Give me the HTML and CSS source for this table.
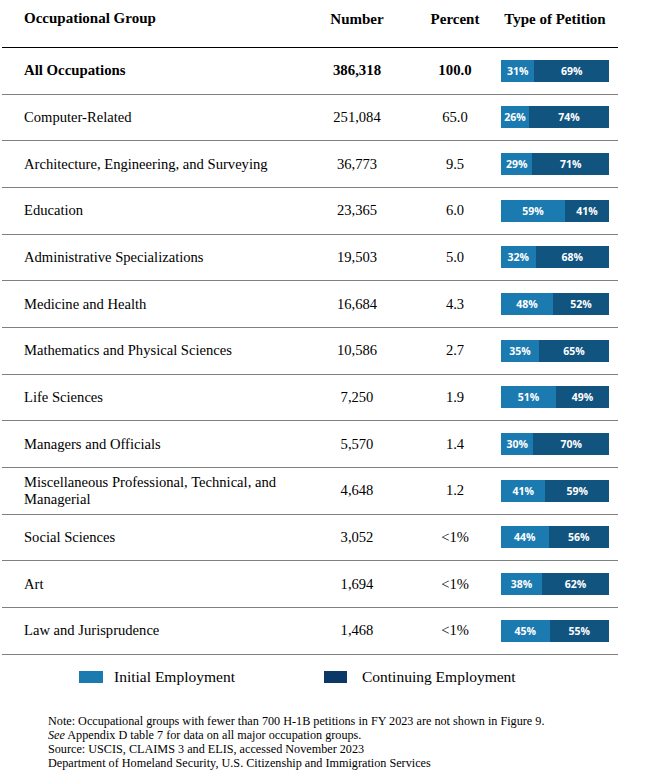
FILE: index.html
```html
<!DOCTYPE html>
<html lang="en">

<head>
    <meta charset="UTF-8">
    <title>H-1B Petitions by Occupational Group</title>
    <link rel="stylesheet" href="styles.css">
</head>

<body>
    <div class="figure">
        <div class="table">
            <div class="row head">
                <div class="group">Occupational Group</div>
                <div class="num">Number</div>
                <div class="pct">Percent</div>
                <div class="type">Type of Petition</div>
            </div>

            <div class="row total">
                <div class="group">All Occupations</div>
                <div class="num">386,318</div>
                <div class="pct">100.0</div>
                <div class="bar"><span class="init" style="width: 31%">31%</span><span class="cont">69%</span></div>
            </div>
            <div class="row">
                <div class="group">Computer-Related</div>
                <div class="num">251,084</div>
                <div class="pct">65.0</div>
                <div class="bar"><span class="init" style="width: 26%">26%</span><span class="cont">74%</span></div>
            </div>
            <div class="row">
                <div class="group">Architecture, Engineering, and Surveying</div>
                <div class="num">36,773</div>
                <div class="pct">9.5</div>
                <div class="bar"><span class="init" style="width: 29%">29%</span><span class="cont">71%</span></div>
            </div>
            <div class="row">
                <div class="group">Education</div>
                <div class="num">23,365</div>
                <div class="pct">6.0</div>
                <div class="bar"><span class="init" style="width: 59%">59%</span><span class="cont">41%</span></div>
            </div>
            <div class="row">
                <div class="group">Administrative Specializations</div>
                <div class="num">19,503</div>
                <div class="pct">5.0</div>
                <div class="bar"><span class="init" style="width: 32%">32%</span><span class="cont">68%</span></div>
            </div>
            <div class="row">
                <div class="group">Medicine and Health</div>
                <div class="num">16,684</div>
                <div class="pct">4.3</div>
                <div class="bar"><span class="init" style="width: 48%">48%</span><span class="cont">52%</span></div>
            </div>
            <div class="row">
                <div class="group">Mathematics and Physical Sciences</div>
                <div class="num">10,586</div>
                <div class="pct">2.7</div>
                <div class="bar"><span class="init" style="width: 35%">35%</span><span class="cont">65%</span></div>
            </div>
            <div class="row">
                <div class="group">Life Sciences</div>
                <div class="num">7,250</div>
                <div class="pct">1.9</div>
                <div class="bar"><span class="init" style="width: 51%">51%</span><span class="cont">49%</span></div>
            </div>
            <div class="row">
                <div class="group">Managers and Officials</div>
                <div class="num">5,570</div>
                <div class="pct">1.4</div>
                <div class="bar"><span class="init" style="width: 30%">30%</span><span class="cont">70%</span></div>
            </div>
            <div class="row">
                <div class="group">Miscellaneous Professional, Technical, and Managerial</div>
                <div class="num">4,648</div>
                <div class="pct">1.2</div>
                <div class="bar"><span class="init" style="width: 41%">41%</span><span class="cont">59%</span></div>
            </div>
            <div class="row">
                <div class="group">Social Sciences</div>
                <div class="num">3,052</div>
                <div class="pct">&lt;1%</div>
                <div class="bar"><span class="init" style="width: 44%">44%</span><span class="cont">56%</span></div>
            </div>
            <div class="row">
                <div class="group">Art</div>
                <div class="num">1,694</div>
                <div class="pct">&lt;1%</div>
                <div class="bar"><span class="init" style="width: 38%">38%</span><span class="cont">62%</span></div>
            </div>
            <div class="row">
                <div class="group">Law and Jurisprudence</div>
                <div class="num">1,468</div>
                <div class="pct">&lt;1%</div>
                <div class="bar"><span class="init" style="width: 45%">45%</span><span class="cont">55%</span></div>
            </div>
        </div>

        <div class="legend">
            <div class="key"><span class="swatch light"></span>Initial Employment</div>
            <div class="key second"><span class="swatch dark"></span>Continuing Employment</div>
        </div>

        <div class="notes">
            <p>Note: Occupational groups with fewer than 700 H-1B petitions in FY 2023 are not shown in Figure 9.</p>
            <p><em>See</em> Appendix D table 7 for data on all major occupation groups.</p>
            <p>Source: USCIS, CLAIMS 3 and ELIS, accessed November 2023</p>
            <p>Department of Homeland Security, U.S. Citizenship and Immigration Services</p>
        </div>
    </div>
</body>

</html>
```

FILE: styles.css
```css
body {
    margin: 0;
    padding: 0;
    background: #ffffff;
    color: #000000;
    font-family: 'Liberation Serif', 'Times New Roman', serif;
}

.figure {
    width: 645px;
}

.table {
    width: 616px;
    margin-left: 2px;
}

.row {
    display: grid;
    grid-template-columns: 298px 70px 109px 108px;
    align-items: center;
    box-sizing: border-box;
    height: 46.67px;
    padding: 0 9px 0 22px;
    border-bottom: 1px solid #7f7f7f;
    font-size: 14.6px;
}

.row.head {
    height: 48px;
    align-items: start;
    padding-top: 10px;
    border-bottom: 1px solid #000000;
    font-size: 15px;
    font-weight: bold;
    line-height: 18px;
}

.row.total {
    font-weight: bold;
    font-size: 14.8px;
}

.group {
    line-height: 17px;
}

.num {
    text-align: center;
}

.pct {
    text-align: center;
    padding-left: 17px;
}

.type {
    text-align: center;
    white-space: nowrap;
}

/* stacked bar for the petition split */
.bar {
    display: flex;
    height: 22px;
    font-family: 'Open Sans', 'Liberation Sans', sans-serif;
    font-size: 10.5px;
    font-weight: bold;
    color: #ffffff;
}

.bar span {
    display: flex;
    align-items: center;
    justify-content: center;
}

.bar .init {
    background: #1b7bb0;
}

.bar .cont {
    flex: 1;
    background: #11547f;
}

.legend {
    display: flex;
    align-items: center;
    height: 44px;
    padding-left: 79px;
    font-size: 15.5px;
}

.key {
    display: flex;
    align-items: center;
}

.key.second {
    margin-left: 89px;
}

.swatch {
    width: 24px;
    height: 12px;
    margin-right: 11px;
}

.swatch.light {
    background: #1b7bb0;
}

.swatch.dark {
    width: 23px;
    margin-right: 15px;
    background: #0b3866;
}

.notes {
    padding: 15px 0 0 48px;
    font-size: 12.2px;
    line-height: 14.3px;
}

.notes p {
    margin: 0;
}
```
